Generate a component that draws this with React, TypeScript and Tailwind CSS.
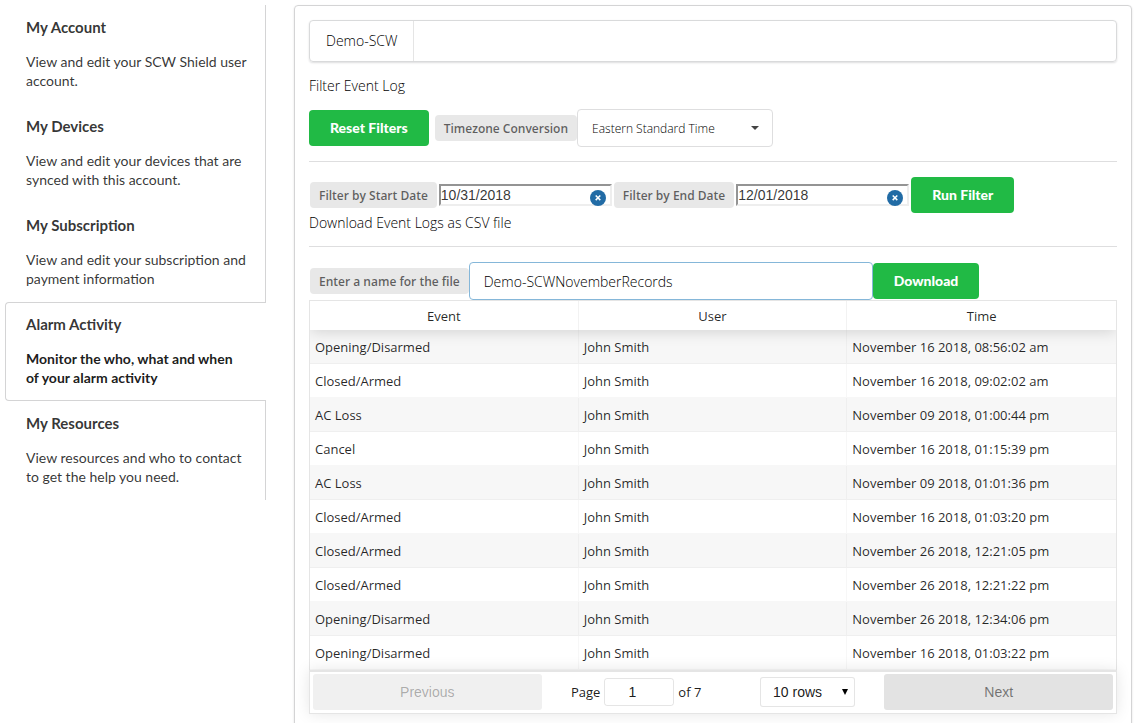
import { useState } from 'react';
import type { InputHTMLAttributes, ReactNode } from 'react';

const sections = [
  { title: 'My Account', text: 'View and edit your SCW Shield user account.' },
  { title: 'My Devices', text: 'View and edit your devices that are synced with this account.' },
  { title: 'My Subscription', text: 'View and edit your subscription and payment information' },
  { title: 'Alarm Activity', text: 'Monitor the who, what and when of your alarm activity' },
  { title: 'My Resources', text: 'View resources and who to contact to get the help you need.' },
];

const events = [
  ['Opening/Disarmed', 'John Smith', 'November 16 2018, 08:56:02 am'],
  ['Closed/Armed', 'John Smith', 'November 16 2018, 09:02:02 am'],
  ['AC Loss', 'John Smith', 'November 09 2018, 01:00:44 pm'],
  ['Cancel', 'John Smith', 'November 16 2018, 01:15:39 pm'],
  ['AC Loss', 'John Smith', 'November 09 2018, 01:01:36 pm'],
  ['Closed/Armed', 'John Smith', 'November 16 2018, 01:03:20 pm'],
  ['Closed/Armed', 'John Smith', 'November 26 2018, 12:21:05 pm'],
  ['Closed/Armed', 'John Smith', 'November 26 2018, 12:21:22 pm'],
  ['Opening/Disarmed', 'John Smith', 'November 26 2018, 12:34:06 pm'],
  ['Opening/Disarmed', 'John Smith', 'November 16 2018, 01:03:22 pm'],
];

function SideNav() {
  const [active, setActive] = useState('Alarm Activity');

  return (
    <nav className="w-[261px] shrink-0 font-['Lato',sans-serif]">
      {sections.map(({ title, text }) => {
        const isActive = title === active;
        return (
          <a
            key={title}
            href="#"
            onClick={() => setActive(title)}
            className={
              isActive
                ? 'block h-[99px] rounded-l border border-r-0 border-[#d4d4d5] pt-3 pl-5 pr-6 text-black/90'
                : 'block h-[99px] border-r border-[#d4d4d5] pt-[13px] pl-[21px] pr-4 text-black/80'
            }
          >
            <h3 className="text-[15px] leading-[18px] font-bold text-black/80">{title}</h3>
            <p className={isActive ? 'mt-4 text-sm leading-[19px] font-bold' : 'mt-4 text-sm leading-[19px]'}>{text}</p>
          </a>
        );
      })}
    </nav>
  );
}

function GreenButton({ children }: { children: ReactNode }) {
  return (
    <button
      type="button"
      className="h-9 shrink-0 rounded bg-[#21ba45] px-[21px] font-['Lato',sans-serif] text-sm font-black text-white"
    >
      {children}
    </button>
  );
}

function Tag({ htmlFor, children }: { htmlFor: string; children: ReactNode }) {
  return (
    <label
      htmlFor={htmlFor}
      className="flex h-[26px] shrink-0 items-center rounded bg-[#e8e8e8] px-[9px] pt-px text-xs font-semibold whitespace-nowrap text-black/60"
    >
      {children}
    </label>
  );
}

function DateInput(props: InputHTMLAttributes<HTMLInputElement>) {
  return (
    <div className="relative flex">
      <input
        type="text"
        {...props}
        className="h-[22px] w-[173px] border-2 border-t-[#949494] border-r-[#eeeeee] border-b-[#eeeeee] border-l-[#949494] font-['Liberation_Sans',sans-serif] text-sm font-normal text-black/80 outline-none"
      />
      <button type="button" aria-label="Clear date" className="absolute top-[6px] right-[6px] size-4">
        <svg viewBox="0 0 16 16" className="size-4">
          <circle cx="8" cy="8" r="8" fill="#216ba5" />
          <path d="M5.7 5.5l4.6 4.6M10.3 5.5l-4.6 4.6" stroke="#fff" strokeWidth="1.5" />
        </svg>
      </button>
    </div>
  );
}

function Pagination() {
  return (
    <div className="flex h-[44px] items-center border border-t-2 border-black/10 bg-white px-[3px] pt-[2px] pb-[3px] text-sm shadow-[0_0_15px_0_rgba(0,0,0,0.1)]">
      <button
        type="button"
        disabled
        className="h-9 flex-1 rounded-[3px] bg-[#f0f0f0] font-['Liberation_Sans',sans-serif] font-normal text-black/30"
      >
        Previous
      </button>
      <div className="flex flex-[1.5] items-center justify-around">
        <label className="flex items-center gap-1 text-[13px] font-normal text-black/90">
          Page
          <input
            type="text"
            defaultValue="1"
            className="h-7 w-[70px] rounded-[3px] border border-black/10 pr-[14px] text-center font-['Liberation_Sans',sans-serif] text-sm outline-none"
          />
          of 7
        </label>
        <div className="relative">
          <select
            aria-label="Rows per page"
            className="h-[30px] w-[95px] appearance-none rounded-[3px] border border-black/10 bg-white px-3 font-['Liberation_Sans',sans-serif] text-sm font-normal text-black/90 outline-none"
          >
            <option>10 rows</option>
            <option>20 rows</option>
            <option>50 rows</option>
          </select>
          <svg viewBox="0 0 6 6" className="pointer-events-none absolute top-3 right-[7px] size-[6px]">
            <path d="M0 0h6L3 6z" />
          </svg>
        </div>
      </div>
      <button
        type="button"
        className="h-9 flex-1 rounded-[3px] bg-[#e3e3e3] font-['Liberation_Sans',sans-serif] font-normal text-black/50"
      >
        Next
      </button>
    </div>
  );
}

function EventTable() {
  return (
    <div className="overflow-hidden border-x border-t border-black/10">
      <table className="w-full table-fixed border-separate border-spacing-0 text-[13px] font-normal text-black/85">
        <thead className="relative shadow-[0_2px_15px_0_rgba(0,0,0,0.15)]">
          <tr>
            {['Event', 'User', 'Time'].map((name) => (
              <th key={name} scope="col" className="h-[29px] border-r border-black/5 pt-[2px] font-normal last:border-r-0">
                {name}
              </th>
            ))}
          </tr>
        </thead>
        <tbody>
          {events.map((row, i) => (
            <tr key={i} className="odd:bg-black/3">
              {row.map((cell, j) => (
                <td key={j} className="h-[34px] border-r border-b border-black/3 px-[5px] pt-[2px] last:border-r-0">
                  {cell}
                </td>
              ))}
            </tr>
          ))}
        </tbody>
      </table>
    </div>
  );
}

export default function App() {
  return (
    <div className="flex gap-7 bg-white px-[5px] pt-[5px] pr-[10px] font-['Open_Sans',sans-serif] text-black">
      <SideNav />
      <main className="min-w-0 flex-1 rounded border border-[#d4d4d5] p-[14px] text-sm font-light shadow-[0_1px_2px_0_rgba(34,36,38,0.15)]">
        <div className="flex h-[42px] rounded border border-[#d9dadb] shadow-[0_1px_2px_0_rgba(34,36,38,0.15)]">
          <a href="#" className="flex items-center border-r border-black/10 px-4">
            Demo-SCW
          </a>
        </div>

        <p className="mt-[14px] leading-5">Filter Event Log</p>
        <div className="mt-[13px] flex items-center">
          <GreenButton>Reset Filters</GreenButton>
          <div className="ml-[6px] flex items-center">
            <Tag htmlFor="timezone">Timezone Conversion</Tag>
            <div className="relative">
              <select
                id="timezone"
                className="h-[38px] w-[196px] appearance-none rounded border border-[#dededf] bg-white px-[14px] pt-px text-xs outline-none"
              >
                <option>Eastern Standard Time</option>
                <option>Central Standard Time</option>
                <option>Pacific Standard Time</option>
              </select>
              <svg viewBox="0 0 8 4" className="pointer-events-none absolute top-[17px] right-[14px] h-1 w-2">
                <path d="M0 0h8L4 4z" fill="#444" />
              </svg>
            </div>
          </div>
        </div>

        <hr className="mt-[14px] border-[#dededf]" />

        <div className="mt-[15px] flex items-center gap-[2px] pl-px">
          <Tag htmlFor="start">Filter by Start Date</Tag>
          <DateInput id="start" defaultValue="10/31/2018" />
          <Tag htmlFor="end">Filter by End Date</Tag>
          <DateInput id="end" defaultValue="12/01/2018" />
          <GreenButton>Run Filter</GreenButton>
        </div>
        <p className="leading-5">Download Event Logs as CSV file</p>

        <hr className="mt-[13px] border-[#dededf]" />

        <div className="mt-[15px] flex items-center pl-px">
          <Tag htmlFor="filename">Enter a name for the file</Tag>
          <input
            id="filename"
            type="text"
            defaultValue="Demo-SCWNovemberRecords"
            className="h-[38px] w-[404px] rounded border border-[#85b7d9] px-[14px] outline-none"
          />
          <GreenButton>Download</GreenButton>
        </div>

        <EventTable />
        <Pagination />
      </main>
    </div>
  );
}
